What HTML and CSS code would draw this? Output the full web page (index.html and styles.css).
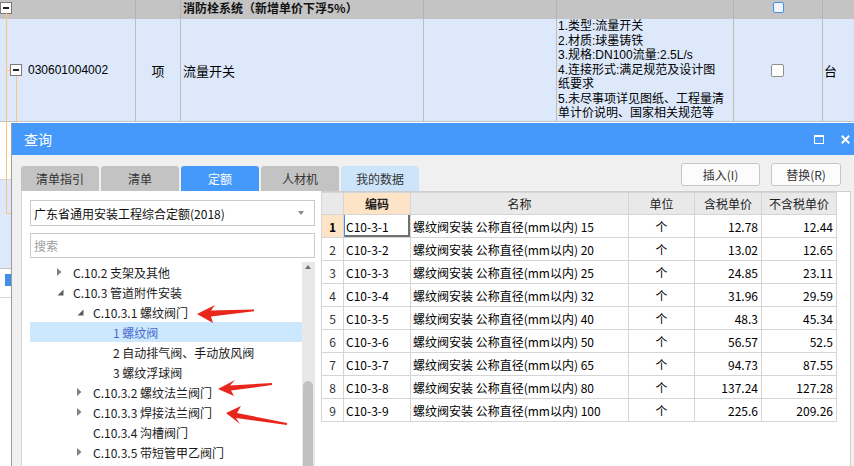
FILE: index.html
```html
<!DOCTYPE html>
<html lang="zh-CN">
<head>
<meta charset="utf-8">
<title>查询</title>
<link rel="stylesheet" href="styles.css">
</head>
<body>
<div class="sheet">
  <svg class="treelines" width="30" height="240" viewBox="0 0 30 240">
    <path d="M6.5 12 V213.5 H11" fill="none" stroke="#ffc27c" stroke-width="1"/>
    <path d="M6.5 70.5 H10" fill="none" stroke="#ffc27c" stroke-width="1"/>
    <path d="M16.5 76 V130" fill="none" stroke="#ffc27c" stroke-width="1"/>
  </svg>
  <div class="srow grp">
    <div class="c c0"><span class="mbox"></span></div>
    <div class="c c1"></div>
    <div class="c c2 grp-title">消防栓系统（新增单价下浮5%）</div>
    <div class="c c3"></div>
    <div class="c c4"></div>
    <div class="c c5 center"><span class="cbox blue"></span></div>
    <div class="c c6"></div>
  </div>
  <div class="srow item">
    <div class="c c0 code"><span class="mbox"></span><span>030601004002</span></div>
    <div class="c c1 center">项</div>
    <div class="c c2 pl">流量开关</div>
    <div class="c c3"></div>
    <div class="c c4 desc">1.类型:流量开关<br>2.材质:球墨铸铁<br>3.规格:DN100流量:2.5L/s<br>4.连接形式:满足规范及设计图<br>纸要求<br>5.未尽事项详见图纸、工程量清<br>单计价说明、国家相关规范等</div>
    <div class="c c5 center"><span class="cbox"></span></div>
    <div class="c c6 unit">台</div>
  </div>
  <div class="srow r3"></div>
  <div class="srow r4"></div>
  <div class="srow r5"><span class="selmark"></span></div>
</div>

<div class="dlg">
  <div class="dlg-title">
    <span>查询</span>
    <div class="winbtns">
      <span class="maxi"></span>
      <svg class="close" width="9" height="9" viewBox="0 0 9 9"><path d="M0.8 0.8 L8.2 8.2 M8.2 0.8 L0.8 8.2" stroke="#fff" stroke-width="2"/></svg>
    </div>
  </div>
  <div class="toolbar">
    <div class="tabs">
      <div class="tab">清单指引</div>
      <div class="tab">清单</div>
      <div class="tab active">定额</div>
      <div class="tab">人材机</div>
      <div class="tab mine">我的数据</div>
    </div>
    <div class="btns">
      <div class="btn b1">插入(I)</div>
      <div class="btn b2">替换(R)</div>
    </div>
  </div>
  <div class="main">
    <div class="lpanel">
      <div class="select">广东省通用安装工程综合定额(2018)<span class="caret"></span></div>
      <div class="search">搜索</div>
      <div class="treebox">
        <div class="tree">
          <div class="node l0"><span class="tw"><svg width="5" height="8" viewBox="0 0 5 8"><path d="M0 0 L4.5 4 L0 8z" fill="#808080"/></svg></span>C.10.2 支架及其他</div>
          <div class="node l0"><span class="tw"><svg width="7" height="7" viewBox="0 0 7 7"><path d="M6.5 0.5 V6.5 H0.5z" fill="#5a5a5a"/></svg></span>C.10.3 管道附件安装</div>
          <div class="node l1"><span class="tw"><svg width="7" height="7" viewBox="0 0 7 7"><path d="M6.5 0.5 V6.5 H0.5z" fill="#5a5a5a"/></svg></span>C.10.3.1 螺纹阀门</div>
          <div class="node l2 sel"><span class="tw"></span>1 螺纹阀</div>
          <div class="node l2"><span class="tw"></span>2 自动排气阀、手动放风阀</div>
          <div class="node l2"><span class="tw"></span>3 螺纹浮球阀</div>
          <div class="node l1"><span class="tw"><svg width="5" height="8" viewBox="0 0 5 8"><path d="M0 0 L4.5 4 L0 8z" fill="#808080"/></svg></span>C.10.3.2 螺纹法兰阀门</div>
          <div class="node l1"><span class="tw"><svg width="5" height="8" viewBox="0 0 5 8"><path d="M0 0 L4.5 4 L0 8z" fill="#808080"/></svg></span>C.10.3.3 焊接法兰阀门</div>
          <div class="node l1"><span class="tw"></span>C.10.3.4 沟槽阀门</div>
          <div class="node l1"><span class="tw"><svg width="5" height="8" viewBox="0 0 5 8"><path d="M0 0 L4.5 4 L0 8z" fill="#808080"/></svg></span>C.10.3.5 带短管甲乙阀门</div>
        </div>
        <div class="vscroll"><span class="up"></span><span class="thumb"></span></div>
      </div>
    </div>
    <div class="rpanel">
      <table class="grid">
        <colgroup><col class="w0"><col class="w1"><col class="w2"><col class="w3"><col class="w4"><col class="w5"></colgroup>
        <thead>
          <tr><th></th><th class="hl">编码</th><th>名称</th><th>单位</th><th>含税单价</th><th>不含税单价</th></tr>
        </thead>
        <tbody>
          <tr><td class="rn hl">1</td><td class="act">C10-3-1</td><td>螺纹阀安装 公称直径(mm以内) 15</td><td class="ctr">个</td><td class="num">12.78</td><td class="num">12.44</td></tr>
          <tr><td class="rn">2</td><td>C10-3-2</td><td>螺纹阀安装 公称直径(mm以内) 20</td><td class="ctr">个</td><td class="num">13.02</td><td class="num">12.65</td></tr>
          <tr><td class="rn">3</td><td>C10-3-3</td><td>螺纹阀安装 公称直径(mm以内) 25</td><td class="ctr">个</td><td class="num">24.85</td><td class="num">23.11</td></tr>
          <tr><td class="rn">4</td><td>C10-3-4</td><td>螺纹阀安装 公称直径(mm以内) 32</td><td class="ctr">个</td><td class="num">31.96</td><td class="num">29.59</td></tr>
          <tr><td class="rn">5</td><td>C10-3-5</td><td>螺纹阀安装 公称直径(mm以内) 40</td><td class="ctr">个</td><td class="num">48.3</td><td class="num">45.34</td></tr>
          <tr><td class="rn">6</td><td>C10-3-6</td><td>螺纹阀安装 公称直径(mm以内) 50</td><td class="ctr">个</td><td class="num">56.57</td><td class="num">52.5</td></tr>
          <tr><td class="rn">7</td><td>C10-3-7</td><td>螺纹阀安装 公称直径(mm以内) 65</td><td class="ctr">个</td><td class="num">94.73</td><td class="num">87.55</td></tr>
          <tr><td class="rn">8</td><td>C10-3-8</td><td>螺纹阀安装 公称直径(mm以内) 80</td><td class="ctr">个</td><td class="num">137.24</td><td class="num">127.28</td></tr>
          <tr><td class="rn">9</td><td>C10-3-9</td><td>螺纹阀安装 公称直径(mm以内) 100</td><td class="ctr">个</td><td class="num">225.6</td><td class="num">209.26</td></tr>
        </tbody>
      </table>
    </div>
  </div>
</div>

<svg class="annot" width="854" height="466" viewBox="0 0 854 466">
  <polygon points="197,314 215,305 211,310.5 254,309.5 254,311.2 211,316.5 213,323" fill="#e8261c"/>
  <polygon points="218,389 235,380 230,385.5 272,383 272,385 231,390.5 234,396" fill="#e8261c"/>
  <polygon points="226,413 241,406 237,413 287,423 287,425 236,418 240,424" fill="#e8261c"/>
</svg>
</body>
</html>
```
FILE: styles.css
```css
* { box-sizing: border-box; }
html, body { margin: 0; padding: 0; }
body {
  width: 854px;
  height: 466px;
  overflow: hidden;
  position: relative;
  background: #fff;
  font-family: "Noto Sans CJK SC", "Noto Sans", sans-serif;
  font-size: 12px;
  color: #000;
}

/* background sheet */
.sheet { position: relative; width: 854px; }
.treelines { position: absolute; left: 0; top: 0; z-index: 1; pointer-events: none; }
.srow { display: flex; }
.c { flex: none; border-right: 1px solid #bdbdbd; }
.c0 { width: 136px; }
.c1 { width: 45px; }
.c2 { width: 243px; }
.c3 { width: 133px; }
.c4 { width: 177px; }
.c5 { width: 89px; }
.c6 { flex: 1; border-right: 0; }
.center { display: flex; justify-content: center; }

.grp { height: 19px; background: #c4c4c4; }
.grp .c { border-right-color: #b3b3b3; }
.grp .c5 { align-items: flex-start; padding-top: 2px; }
.grp-title { font-weight: 700; padding-left: 2px; line-height: 16px; color: #111; white-space: nowrap; }

.item { height: 103px; background: #dde9fb; border-bottom: 1px solid #c2c2c2; }
.item .c { display: flex; align-items: center; }
.item .code { padding-left: 10px; gap: 6px; font-family: "Liberation Sans", sans-serif; font-size: 12px; }
.item .c1 { justify-content: center; font-size: 13px; }
.item .pl { padding-left: 2px; font-size: 13px; }
.item .c5 { justify-content: center; padding-right: 2px; }
.item .desc {
  display: block;
  padding-left: 1px;
  white-space: nowrap;
  font-family: "Liberation Sans", "Noto Sans CJK SC", sans-serif;
  font-size: 12px;
  line-height: 14.5px;
}
.item .unit { padding-left: 1px; font-size: 13px; }

.r3 { height: 58px; border-bottom: 1px solid #d6d6d6; }
.r4 { height: 89px; background: #dde9fb; border-bottom: 1px solid #c2c2c2; }
.r5 { height: 29px; border-bottom: 1px solid #d6d6d6; }
.selmark { display: block; margin: 5px 0 0 5px; width: 6px; height: 12px; background: #3f8fe8; }

.mbox {
  display: inline-block;
  flex: none;
  width: 12px;
  height: 12px;
  border: 1px solid #7c7c7c;
  background: #fff;
  position: relative;
}
.mbox::after {
  content: "";
  position: absolute;
  left: 2px;
  right: 2px;
  top: 4px;
  height: 2px;
  background: #222;
}
.cbox {
  display: inline-block;
  width: 13px;
  height: 13px;
  border: 1px solid #8e8e8e;
  border-radius: 2px;
  background: #fff;
}
.cbox.blue {
  width: 11px;
  height: 11px;
  border: 1.5px solid #4390ea;
  background: #eef5ff;
}

/* dialog */
.dlg {
  position: absolute;
  left: 11px;
  top: 123px;
  width: 862px;
  height: 360px;
  background: #f0f0f0;
  border-left: 1px solid #9b9b9b;
  z-index: 2;
  display: flex;
  flex-direction: column;
}
.dlg-title {
  flex: none;
  height: 32px;
  background: #4599fa;
  color: #fff;
  font-size: 14px;
  display: flex;
  align-items: center;
  padding: 0 23px 0 12px;
}
.winbtns { margin-left: auto; display: flex; align-items: center; gap: 17px; }
.maxi {
  display: block;
  width: 10px;
  height: 9px;
  border: 1.5px solid #fff;
  border-top-width: 2.5px;
}
.close { display: block; }

.toolbar {
  flex: none;
  height: 36px;
  display: flex;
  padding: 0 32px 0 9px;
}
.tabs { display: flex; gap: 2px; align-self: flex-end; }
.tab {
  width: 78px;
  height: 25px;
  background: #c3c3c3;
  border-radius: 3px 3px 0 0;
  display: flex;
  align-items: center;
  justify-content: center;
  color: #333;
  font-size: 12px;
}
.tab.active { background: #4599fa; color: #fff; }
.tab.mine { background: #cde5fa; }
.btns { margin-left: auto; display: flex; gap: 11px; align-self: flex-start; margin-top: 8px; }
.btn {
  height: 23px;
  border: 1px solid #c6c6c6;
  border-radius: 3px;
  background: #fcfcfc;
  display: flex;
  align-items: center;
  justify-content: center;
  color: #333;
}
.b1 { width: 79px; }
.b2 { width: 70px; }

.main { flex: 1; display: flex; padding-left: 9px; min-height: 0; }
.lpanel {
  flex: none;
  width: 300px;
  background: #fff;
  border-left: 1px solid #d3d3d3;
  padding: 9px 0 0 8px;
  display: flex;
  flex-direction: column;
}
.select {
  width: 285px;
  height: 26px;
  border: 1px solid #c9c9c9;
  display: flex;
  align-items: center;
  padding-left: 3px;
  position: relative;
  color: #111;
}
.caret {
  position: absolute;
  right: 10px;
  top: 10px;
  width: 0;
  height: 0;
  border-left: 3px solid transparent;
  border-right: 3px solid transparent;
  border-top: 4px solid #8a8a8a;
}
.search {
  margin-top: 7px;
  width: 285px;
  height: 25px;
  border: 1px solid #c9c9c9;
  color: #a0a0a0;
  padding-left: 3px;
  display: flex;
  align-items: center;
}
.treebox { margin-top: 4px; display: flex; width: 285px; flex: 1; }
.tree { flex: 1; }
.node {
  height: 20px;
  display: flex;
  align-items: center;
  white-space: nowrap;
  color: #1b1b1b;
}
.node .tw { width: 16px; flex: none; height: 20px; display: flex; align-items: center; }
.node.l0 { padding-left: 27px; }
.node.l1 { padding-left: 47px; }
.node.l2 { padding-left: 67px; }
.node.sel { background: #cce8ff; color: #4a6bcc; }

.vscroll {
  flex: none;
  width: 13px;
  background: #e8e8e8;
  position: relative;
}
.up {
  position: absolute;
  left: 3px;
  top: 3px;
  width: 0;
  height: 0;
  border-left: 3.5px solid transparent;
  border-right: 3.5px solid transparent;
  border-bottom: 4px solid #6e6e6e;
}
.thumb {
  position: absolute;
  left: 1px;
  top: 119px;
  width: 10px;
  height: 120px;
  border-radius: 5px;
  background: #c1c1c1;
}

.rpanel {
  flex: none;
  width: 530px;
  background: #fff;
  border-top: 1px solid #cdcdcd;
  border-right: 1px solid #cdcdcd;
}
.grid {
  border-collapse: collapse;
  table-layout: fixed;
  width: 515px;
  font-size: 12px;
}
.w0 { width: 22px; }
.w1 { width: 67px; }
.w2 { width: 218px; }
.w3 { width: 66px; }
.w4 { width: 67px; }
.w5 { width: 75px; }
.grid th, .grid td {
  border: 1px solid #d5d5d5;
  padding: 0 2px;
  height: 23px;
  white-space: nowrap;
  overflow: hidden;
  font-weight: normal;
}
.grid th { background: #e9e9e9; height: 22px; color: #222; text-align: center; }
.grid th.hl { background: #fde4c6; font-weight: 700; }
.grid td.rn { text-align: center; padding: 0; color: #333; }
.grid td.rn.hl { background: #fde4c6; font-weight: 700; color: #000; }
.grid td.act { box-shadow: inset 1px 0 0 #3d8ee0, inset -2px -2px 0 #707070; }
.grid .ctr { text-align: center; }
.grid .num { text-align: right; padding-right: 3px; }

.annot { position: absolute; left: 0; top: 0; z-index: 3; pointer-events: none; }
```
